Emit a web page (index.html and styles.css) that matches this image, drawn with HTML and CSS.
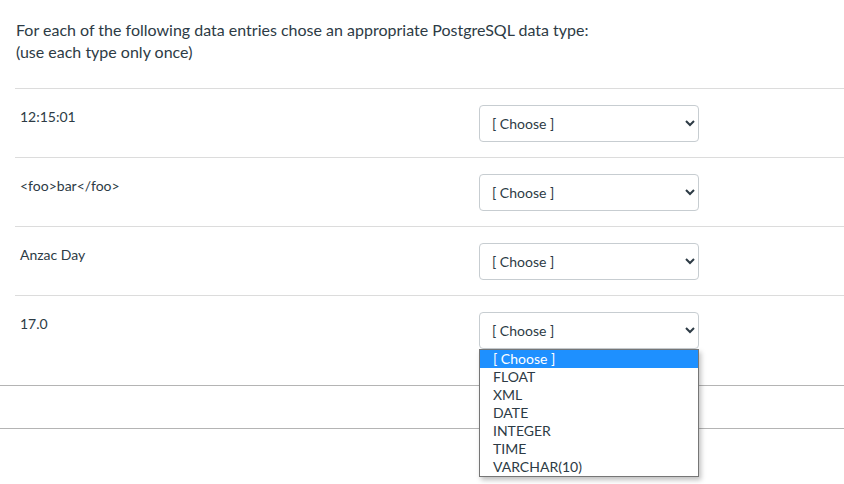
FILE: index.html
```html
<!DOCTYPE html>
<html lang="en">
<head>
    <meta charset="UTF-8">
    <meta name="viewport" content="width=device-width, initial-scale=1.0">
    <title>Matching Question</title>
    <link rel="stylesheet" href="styles.css">
</head>
<body>
    <div class="question">
        <div class="question-text">
            <p>For each of the following data entries chose an appropriate PostgreSQL data type:<br>(use each type only once)</p>
        </div>
        <div class="answers">
            <div class="answer">
                <div class="answer-label">12:15:01</div>
                <div class="select-wrap">
                    <select class="answer-select">
                        <option>[ Choose ]</option>
                        <option>FLOAT</option>
                        <option>XML</option>
                        <option>DATE</option>
                        <option>INTEGER</option>
                        <option>TIME</option>
                        <option>VARCHAR(10)</option>
                    </select>
                </div>
            </div>
            <div class="answer">
                <div class="answer-label">&lt;foo&gt;bar&lt;/foo&gt;</div>
                <div class="select-wrap">
                    <select class="answer-select">
                        <option>[ Choose ]</option>
                        <option>FLOAT</option>
                        <option>XML</option>
                        <option>DATE</option>
                        <option>INTEGER</option>
                        <option>TIME</option>
                        <option>VARCHAR(10)</option>
                    </select>
                </div>
            </div>
            <div class="answer">
                <div class="answer-label">Anzac Day</div>
                <div class="select-wrap">
                    <select class="answer-select">
                        <option>[ Choose ]</option>
                        <option>FLOAT</option>
                        <option>XML</option>
                        <option>DATE</option>
                        <option>INTEGER</option>
                        <option>TIME</option>
                        <option>VARCHAR(10)</option>
                    </select>
                </div>
            </div>
            <div class="answer">
                <div class="answer-label">17.0</div>
                <div class="select-wrap">
                    <select class="answer-select">
                        <option>[ Choose ]</option>
                        <option>FLOAT</option>
                        <option>XML</option>
                        <option>DATE</option>
                        <option>INTEGER</option>
                        <option>TIME</option>
                        <option>VARCHAR(10)</option>
                    </select>
                    <!-- the open list of the last select -->
                    <ul class="dropdown">
                        <li class="selected">[ Choose ]</li>
                        <li>FLOAT</li>
                        <li>XML</li>
                        <li>DATE</li>
                        <li>INTEGER</li>
                        <li>TIME</li>
                        <li>VARCHAR(10)</li>
                    </ul>
                </div>
            </div>
        </div>
    </div>
    <div class="question-footer"></div>
</body>
</html>
```

FILE: styles.css
```css
html, body {
    min-height: 484px;
}

body {
    font-family: Lato, "Noto Sans", sans-serif;
    color: #2d3b45;
    margin: 0;
    background-color: #fff;
}

.question {
    border-bottom: 1px solid #b4b4b4;
    padding-bottom: 21px;
}

.question-text {
    padding: 0 16px;
}

.question-text p {
    margin: 0;
    padding: 19px 0 25px;
    font-size: 16px;
    line-height: 22px;
}

.answers {
    margin-left: 15px;
}

.answer {
    display: grid;
    grid-template-columns: 464px 220px;
    border-top: 1px solid #dcdcdc;
    padding: 16px 0 15px;
}

.answer-label {
    font-size: 14px;
    line-height: 20px;
    padding: 2px 0 0 5px;
}

.select-wrap {
    position: relative;
}

.answer-select {
    width: 220px;
    height: 37px;
    font-family: Lato, "Noto Sans", sans-serif;
    font-size: 14px;
    color: #2d3b45;
    background-color: #fff;
    border: 1px solid #c7cdd1;
    border-radius: 4px;
    padding: 0 8px 0 8px;
}

.dropdown {
    position: absolute;
    top: 37px;
    left: 0;
    width: 218px;
    margin: 0;
    padding: 0;
    list-style: none;
    background-color: #fff;
    border: 1px solid #767676;
    box-shadow: 2px 3px 5px rgba(0, 0, 0, 0.25);
    z-index: 1;
}

.dropdown li {
    font-size: 14px;
    line-height: 18px;
    height: 18px;
    padding-left: 13px;
    color: #2d3b45;
}

.dropdown li.selected {
    background-color: #1e90ff;
    color: #fff;
}

.question-footer {
    height: 42px;
    border-bottom: 1px solid #b4b4b4;
}
```
